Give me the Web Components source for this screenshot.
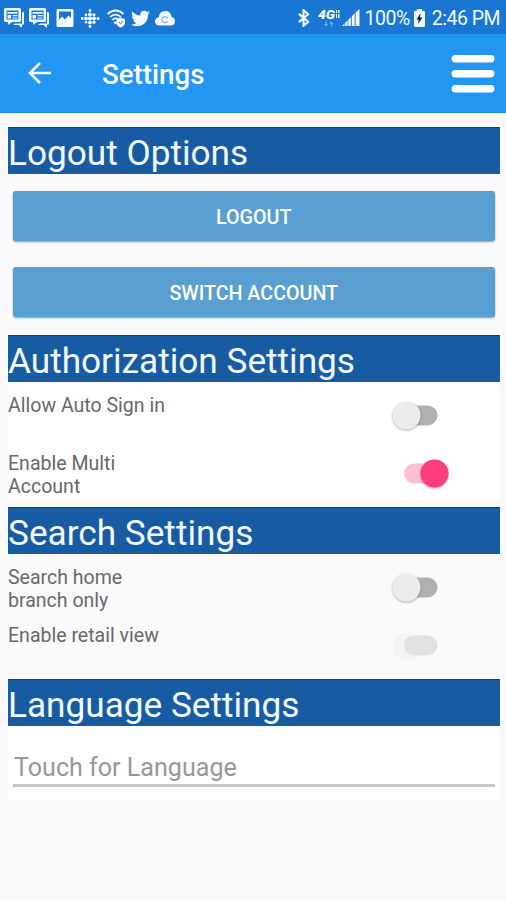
<!DOCTYPE html>
<html lang="en">
<head>
<meta charset="utf-8">
<title>Settings</title>
<style>
	html, body {
		margin: 0;
		height: 100%;
		background: #fafafa;
		font-family: Roboto, "Liberation Sans", sans-serif;
		overflow: hidden;
	}
</style>
</head>
<body>
<settings-page></settings-page>

<script>
class StatusBar extends HTMLElement {
	constructor() {
		super();
		this.attachShadow({ mode: "open" });
	}

	connectedCallback() {
		this.shadowRoot.innerHTML = `
		<style>
		:host {
			display: flex;
			justify-content: space-between;
			align-items: center;
			box-sizing: border-box;
			height: 34px;
			padding: 2px 6px 0 4px;
			background: #1976d2;
			color: #f2f8ff;
			font-size: 19.5px;
			line-height: 32px;
			white-space: nowrap;
		}
		div {
			display: flex;
			align-items: center;
		}
		.left { gap: 5px; }
		svg {
			display: block;
			fill: #f2f8ff;
		}
		span {
			padding-top: 2px;
			letter-spacing: -.5px;
		}
		.time { margin-left: 7px; }
		</style>
		<div class="left">
			<svg width="20" height="20" viewBox="0 0 20 20"><path fill-rule="evenodd" d="M1.500 0h14q1.500 0 1.500 1.500v11q0 1.500-1.500 1.500H8l-4 3v-3H1.500Q0 14 0 12.500v-11Q0 0 1.500 0zM2.500 2.500v9h12v-9zM3.500 4h10v1.700h-10zM3.500 7h3.500v3.500H3.500zM8.500 7h5v1.300h-5zM8.500 9.400h5v1.200h-5z"/><path d="M18 4h.7q1.300 0 1.300 1.300v10.200q0 1.300-1.300 1.300H18V20l-3.500-3H9l2-1.600h7z"/></svg>
			<svg width="20" height="20" viewBox="0 0 20 20"><path fill-rule="evenodd" d="M1.500 0h14q1.500 0 1.500 1.500v11q0 1.500-1.500 1.500H8l-4 3v-3H1.500Q0 14 0 12.500v-11Q0 0 1.500 0zM2.500 2.500v9h12v-9zM3.500 4h10v1.700h-10zM3.500 7h3.500v3.500H3.500zM8.500 7h5v1.300h-5zM8.500 9.400h5v1.200h-5z"/><path d="M18 4h.7q1.300 0 1.300 1.300v10.200q0 1.300-1.300 1.300H18V20l-3.500-3H9l2-1.600h7z"/></svg>
			<svg width="22" height="18" viewBox="0 0 22 18"><path fill-rule="evenodd" d="M4 0h14q1.500 0 1.500 1.500v15q0 1.500-1.500 1.500H4q-1.500 0-1.500-1.500v-15Q2.500 0 4 0zM5 2.500v8.500l3-3.500 3 3 3.500-4 2.500 2.500V2.500z"/></svg>
			<svg width="19" height="19" viewBox="0 0 19 19"><circle cx="1.300" cy="9.500" r="1.400"/><circle cx="5" cy="9.500" r="1.900"/><circle cx="5" cy="5.800" r="1.300"/><circle cx="5" cy="13.200" r="1.300"/><circle cx="9" cy="1.500" r="1.400"/><circle cx="9" cy="5.500" r="1.900"/><circle cx="9" cy="9.500" r="2.100"/><circle cx="9" cy="13.500" r="1.900"/><circle cx="9" cy="17.500" r="1.400"/><circle cx="13" cy="5.800" r="1.600"/><circle cx="13" cy="9.500" r="2"/><circle cx="13" cy="13.200" r="1.600"/><circle cx="17" cy="9.500" r="1.600"/></svg>
			<svg width="19" height="19" viewBox="0 0 19 19" style="margin-left:2px"><g fill="none" stroke="#f2f8ff" stroke-width="1.700"><path d="M.7 5Q8.500-2 16.500 5M3 8.200Q8.500 3.200 14 8.200M5.300 11Q8.500 8 11.500 10.500"/></g><path d="M8.500 12l2 2-2 1.500-2-2z"/><path d="M13.500 8.500l4.500 1.800v3.200q0 3.500-4.500 5-4-1.500-4-5v-3.200z"/><path d="M12 13l1.500 1.800 2.200-2.800" fill="none" stroke="#1976d2" stroke-width="1"/></svg>
			<svg width="19" height="17" viewBox="1.500 3.500 21 18"><path d="M22.460 6c-.770.350-1.600.580-2.460.690.880-.530 1.560-1.370 1.880-2.380-.830.500-1.750.850-2.720 1.050C18.370 4.500 17.260 4 16 4c-2.350 0-4.270 1.920-4.270 4.290 0 .340.040.670.110.980C8.280 9.090 5.110 7.380 3 4.790c-.370.630-.580 1.370-.580 2.150 0 1.490.750 2.810 1.910 3.560-.710 0-1.370-.200-1.950-.500v.030c0 2.080 1.480 3.820 3.440 4.210a4.200 4.200 0 0 1-1.930.070 4.280 4.280 0 0 0 4 2.980 8.520 8.520 0 0 1-5.330 1.840c-.340 0-.680-.020-1.020-.060C3.440 20.290 5.700 21 8.120 21 16 21 20.330 14.460 20.330 8.790c0-.190 0-.370-.010-.560.840-.600 1.560-1.360 2.140-2.230z"/></svg>
			<svg width="20" height="15" viewBox="0 0 20 16" preserveAspectRatio="none"><path d="M5 15.500Q0 15.500 0 11q0-3.500 3.800-4.300Q4.500 0 10.500 0q5 0 6 6Q20 7 20 11q0 4.500-4.500 4.500z"/><path d="M12.700 11a3.200 3.200 0 1 1 .3-3" fill="none" stroke="#7eaee2" stroke-width="1.300"/></svg>
		</div>
		<div class="right">
			<svg width="12" height="18" viewBox="0 0 13 19"><path d="M1 5l10 8.500-5 4.500V1l5 4.500L1 14" fill="none" stroke="#f2f8ff" stroke-width="2.300"/></svg>
			<svg width="22" height="19" viewBox="0 0 22 19" style="margin-left:8px"><text x="0" y="10" font-size="12" font-weight="900" font-style="italic" textLength="17" lengthAdjust="spacingAndGlyphs">4G</text><path d="M18 1h1v3h-1zM18 5h1v4h-1zM20 1h1.500v3H20zM20 5h1.500v4H20z"/><path d="M7.500 12.500h1.200v2.500H10l-2 2.500-2-2.500h1.500zM13 17.500h1.200V15h1.300l-2-2.500-2 2.500H13z" fill="#75b4ef"/></svg>
			<svg width="18" height="18" viewBox="0 0 18 18" style="margin-left:2px"><path d="M0 17l2.500-2.500V17zM3.200 13.800l2.300-2.300V17H3.200zM6.300 10.700l2.500-2.500V17H6.300zM9.800 7.200l2.900-2.900V17H9.800zM13.600 3.400L17.500 0v17h-3.900z"/></svg>
			<span class="battery" style="margin-left:5px">100%</span>
			<svg width="11" height="18" viewBox="0 0 11 18" style="margin-left:4px"><path d="M3 0h5v1.700h1.500Q11 1.700 11 3.200v13.300q0 1.500-1.500 1.500h-8Q0 18 0 16.500V3.200q0-1.500 1.500-1.500H3z"/><path d="M6.700 4L2.500 10.500h2.200L4 15l4.500-6.500H6z" fill="#123"/></svg>
			<span class="time">2:46 PM</span>
		</div>
		`;
	}
}
customElements.define("status-bar", StatusBar);

class AppBar extends HTMLElement {
	constructor() {
		super();
		this.attachShadow({ mode: "open" });
	}

	connectedCallback() {
		this.shadowRoot.innerHTML = `
		<style>
		:host {
			display: flex;
			align-items: center;
			box-sizing: border-box;
			height: 79px;
			padding: 0 11px 0 27px;
			background: #2196f3;
			border-bottom: 1px solid #1a86e2;
			color: #fff;
		}
		svg { display: block; }
		.title {
			flex: 1;
			margin-left: 50px;
			padding-top: 4px;
			font-size: 27.700px;
			font-weight: 500;
			line-height: 32px;
		}
		</style>
		<svg width="25" height="24" viewBox="0 0 25 24" fill="none" stroke="#fff" stroke-width="2.600"><path d="M24 12H3M13 2L3 12 13 22"/></svg>
		<span class="title"><slot></slot></span>
		<svg width="44" height="39" viewBox="0 0 44 39" fill="#fff"><rect x=".5" y="1" width="43" height="7.500" rx="3.700"/><rect x=".5" y="16" width="43" height="7.500" rx="3.700"/><rect x=".5" y="31" width="43" height="7.500" rx="3.700"/></svg>
		`;
	}
}
customElements.define("app-bar", AppBar);

class SettingsSection extends HTMLElement {
	constructor() {
		super();
		this.attachShadow({ mode: "open" });
	}

	connectedCallback() {
		this.shadowRoot.innerHTML = `
		<style>
		:host {
			display: block;
		}
		h2 {
			box-sizing: border-box;
			height: 47px;
			margin: 0;
			border-top: 1px solid #0c4493;
			background: #175ca2;
			color: #f4f8ff;
			font-size: 35.200px;
			font-weight: 400;
			line-height: 50px;
			white-space: nowrap;
		}
		.body {
			background: var(--section-body, transparent);
		}
		</style>
		<h2>${this.getAttribute("heading")}</h2>
		<div class="body"><slot></slot></div>
		`;
	}
}
customElements.define("settings-section", SettingsSection);

class RaisedButton extends HTMLElement {
	constructor() {
		super();
		this.attachShadow({ mode: "open" });
	}

	connectedCallback() {
		this.shadowRoot.innerHTML = `
		<style>
		:host {
			display: block;
		}
		button {
			display: block;
			width: 100%;
			height: 50px;
			padding: 3px 0 0;
			border: 0;
			border-radius: 3px;
			background: #5a9fd2;
			box-shadow: 0 1px 2px rgba(0, 0, 0, .4);
			color: #fff;
			font: 500 19.700px/24px Roboto, sans-serif;
			text-transform: uppercase;
		}
		</style>
		<button><slot></slot></button>
		`;
	}
}
customElements.define("raised-button", RaisedButton);

class SettingRow extends HTMLElement {
	constructor() {
		super();
		this.attachShadow({ mode: "open" });
	}

	get knob() {
		if (this.hasAttribute("disabled")) {
			return `
			<circle cx="15" cy="16.500" r="14" fill="#f4f4f4"/>
			<rect x="12" y="5.500" width="33.500" height="20" rx="10" fill="#e1e1e1"/>`;
		}
		if (this.hasAttribute("checked")) {
			return `
			<rect x="12" y="5.500" width="33.500" height="20" rx="10" fill="#ffbdd3"/>
			<circle class="thumb" cx="42.500" cy="15.500" r="14" fill="#ff3d7c"/>`;
		}
		return `
			<rect x="12" y="5.500" width="33.500" height="20" rx="10" fill="#b0b0b0"/>
			<circle class="thumb" cx="14.500" cy="15.500" r="14" fill="#ececec"/>`;
	}

	connectedCallback() {
		this.shadowRoot.innerHTML = `
		<style>
		:host {
			display: flex;
			justify-content: space-between;
			height: 58px;
			padding-right: 47px;
			box-sizing: border-box;
			color: #696969;
		}
		:host(:last-child) {
			height: 48px;
		}
		.label {
			width: 162px;
			font-size: 19.550px;
			line-height: 23px;
		}
		svg {
			display: block;
			margin-top: 6px;
			overflow: visible;
		}
		.thumb {
			filter: drop-shadow(0 1px 1px rgba(0, 0, 0, .3));
		}
		</style>
		<span class="label"><slot></slot></span>
		<svg width="61" height="34" viewBox="0 0 61 34">${this.knob}</svg>
		`;
	}
}
customElements.define("setting-row", SettingRow);

class LanguageField extends HTMLElement {
	constructor() {
		super();
		this.attachShadow({ mode: "open" });
	}

	connectedCallback() {
		this.shadowRoot.innerHTML = `
		<style>
		:host {
			display: block;
			padding: 24px 5px 13px;
		}
		div {
			height: 34px;
			padding-left: 1px;
			border-bottom: 3px solid #c8c8c8;
			color: #989898;
			font-size: 25.100px;
			line-height: 35px;
		}
		</style>
		<div><slot></slot></div>
		`;
	}
}
customElements.define("language-field", LanguageField);

class SettingsPage extends HTMLElement {
	constructor() {
		super();
		this.attachShadow({ mode: "open" });
	}

	connectedCallback() {
		this.shadowRoot.innerHTML = `
		<style>
		:host {
			display: block;
		}
		main {
			padding: 14px 6.500px 0 8px;
		}
		.buttons {
			display: grid;
			gap: 26px;
			padding: 17px 5px 18px;
		}
		.rows {
			padding-top: 12px;
			margin-bottom: 7px;
		}
		.white {
			--section-body: #fff;
		}
		</style>
		<status-bar></status-bar>
		<app-bar>Settings</app-bar>
		<main>
			<settings-section heading="Logout Options">
				<div class="buttons">
					<raised-button>Logout</raised-button>
					<raised-button>Switch Account</raised-button>
				</div>
			</settings-section>
			<settings-section class="white" heading="Authorization Settings">
				<div class="rows">
					<setting-row>Allow Auto Sign in</setting-row>
					<setting-row checked>Enable Multi Account</setting-row>
				</div>
			</settings-section>
			<settings-section heading="Search Settings">
				<div class="rows">
					<setting-row>Search home branch only</setting-row>
					<setting-row disabled>Enable retail view</setting-row>
				</div>
			</settings-section>
			<settings-section class="white" heading="Language Settings">
				<language-field>Touch for Language</language-field>
			</settings-section>
		</main>
		`;
	}
}
customElements.define("settings-page", SettingsPage);
</script>
</body>
</html>
